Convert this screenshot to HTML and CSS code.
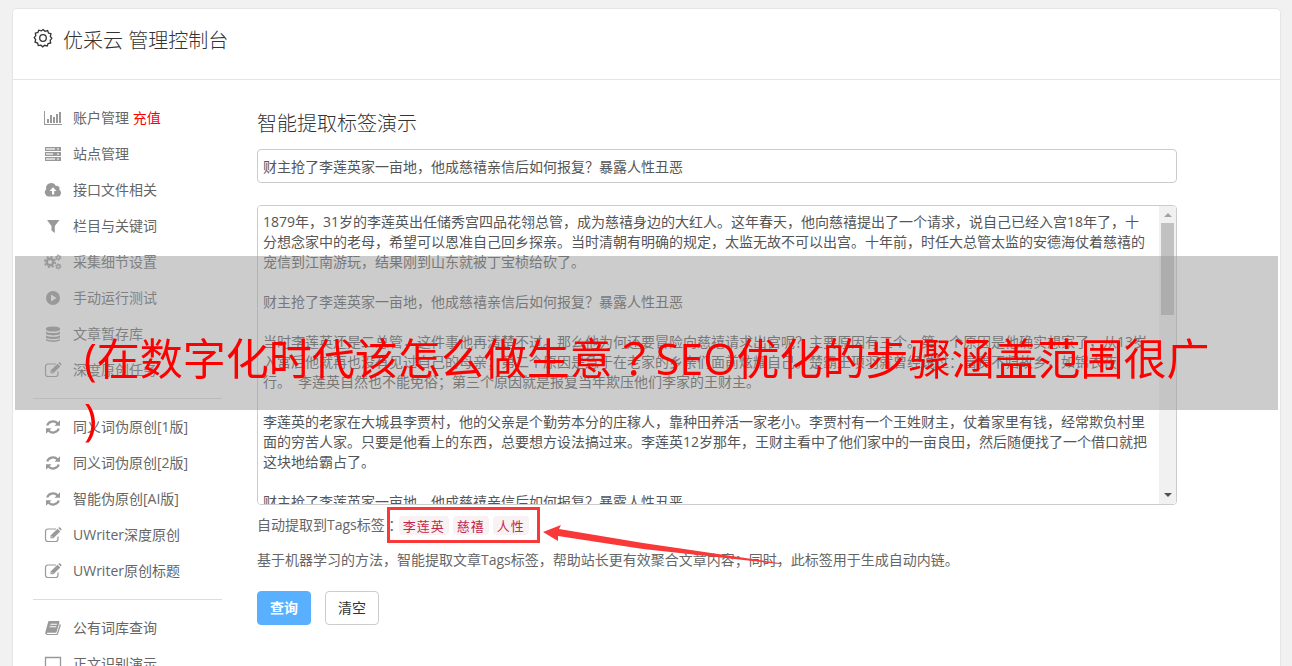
FILE: index.html
```html
<!DOCTYPE html>
<html lang="zh-CN">
<head>
  <meta charset="UTF-8"/>
  <meta name="viewport" content="width=device-width, initial-scale=1.0"/>
  <title>优采云 管理控制台</title>
  <link rel="stylesheet" href="styles.css">
</head>
<body>
  <svg class="sprite" aria-hidden="true">
    <symbol id="i-chart" viewBox="0 0 18 16"><path d="M0 1h1v13h17v1H0zM3 9h2v4H3zM6 5h2v8H6zM9 7h2v6H9zM12 4h2v9h-2zM15 2h2v11h-2z"/></symbol>
    <symbol id="i-server" viewBox="0 0 18 16"><path d="M1 1h16v4H1zM1 6h16v4H1zM1 11h16v4H1z"/><path d="M2 2h9v2H2zM2 7h7v2H2zM2 12h9v2H2z" fill="#fff" opacity=".6"/><path d="M13 2h2v2h-2zM13 7h2v2h-2zM13 12h2v2h-2z" fill="#fff" opacity=".5"/></symbol>
    <symbol id="i-cloud" viewBox="0 0 18 16"><path fill-rule="evenodd" d="M4.500 14.500A4.200 4.200 0 0 1 2.200 7.200 5.200 5.200 0 0 1 12 4a2.600 2.600 0 0 1 3.200 3.700 3.700 3.700 0 0 1-1 6.800zM9 5.200 5.500 9H8v3.500h2.200V9h2.300z"/></symbol>
    <symbol id="i-filter" viewBox="0 0 18 16"><path d="M3 2h12.500L10.800 8v7L7.500 12.500V8z"/></symbol>
    <symbol id="i-cogs" viewBox="0 0 18 16"><circle cx="6" cy="8" r="3.300" fill="none" stroke="currentColor" stroke-width="2.400"/><circle cx="6" cy="8" r="5.200" fill="none" stroke="currentColor" stroke-width="1.800" stroke-dasharray="2.040 2.040"/><circle cx="14.300" cy="3.600" r="1.700" fill="none" stroke="currentColor" stroke-width="1.400"/><circle cx="14.300" cy="3.600" r="2.700" fill="none" stroke="currentColor" stroke-dasharray="1.410 1.410"/><circle cx="14.300" cy="12.400" r="1.700" fill="none" stroke="currentColor" stroke-width="1.400"/><circle cx="14.300" cy="12.400" r="2.700" fill="none" stroke="currentColor" stroke-dasharray="1.410 1.410"/></symbol>
    <symbol id="i-play" viewBox="0 0 18 16"><path fill-rule="evenodd" d="M9 1a7 7 0 1 0 0 14A7 7 0 1 0 9 1zM7 4.500 12.600 8 7 11.500z"/></symbol>
    <symbol id="i-database" viewBox="0 0 18 16"><path d="M2 2.500C2-.3 16-.3 16 2.500v1C16 6.200 2 6.200 2 3.500zM2 5.500c2 2 12 2 14 0v2c0 2.500-14 2.500-14 0zM2 9.200c2 2 12 2 14 0v2c0 2.500-14 2.500-14 0zM2 12.800c2 2 12 2 14 0v1c0 2.800-14 2.800-14 0z"/></symbol>
    <symbol id="i-edit" viewBox="0 0 18 16"><path d="M12 2H4a2.500 2.500 0 0 0-2.500 2.500v7.500A2.500 2.500 0 0 0 4 14.500h7.500A2.500 2.500 0 0 0 14 12v-2.500" fill="none" stroke="currentColor" stroke-width="1.200"/><path fill-rule="evenodd" d="M6.500 8.500 13.500 1.700l2.800 2.700-7 6.900H6.500zM7.500 8.900v1.400h1.400l-.7-.8zM14.300 1l.8-.7c.8-.6 3 1.500 2.300 2.400l-.7.900z"/></symbol>
    <symbol id="i-refresh" viewBox="0 0 18 16"><path d="M3.200 6.500A6 5.500 0 0 1 13.600 4.500M14.800 9.500A6 5.500 0 0 1 4.400 11.500" fill="none" stroke="currentColor" stroke-width="2.200"/><path d="M16 1.300v5.500h-5.500zM2 14.700V9.200h5.500z"/></symbol>
    <symbol id="i-book" viewBox="0 0 18 16"><path fill-rule="evenodd" d="M5.500 1h8.700c1 0 1.500.6 1.200 1.600l-2.700 8.800c-.3 1-.9 1.400-1.800 1.400H3.500c-.8 0-.8 1.200.2 1.200h8.100c.7 0 1-.3 1.200-1L15.800 4c1 .3 1.200.9.900 1.800l-2.600 8c-.2.800-.9 1.300-1.800 1.300H3.500c-1.700 0-2.700-1.500-2.100-3L4 2.400C4.300 1.400 4.700 1 5.500 1zM6.500 3.700l-.3 1h6.600l.3-1zM5.800 6.200l-.3 1h6.600l.3-1z"/></symbol>
    <symbol id="i-laptop" viewBox="0 0 18 16"><path d="M1.500 1.500h15v10h-15zM0 14h18" fill="none" stroke="currentColor" stroke-width="1.300"/></symbol>
  </svg>

  <div class="panel">
    <header class="panel-head">
      <svg class="gear" viewBox="0 0 20 20"><path d="M10 1.500 12 3.300 14.600 2.600 15.500 5 18 5.800 17.300 8.400 18.800 10.300 17.200 12.300 17.700 15 15.100 15.600 14.200 18 11.700 17.300 9.700 18.800 7.900 17.200 5.300 17.600 4.600 15.100 2 14.200 2.700 11.700 1.200 9.700 2.800 7.700 2.300 5.200 4.900 4.500 5.800 2.200 8.400 2.900z"/><circle cx="10" cy="10" r="3.300"/></svg>
      <h1>优采云 管理控制台</h1>
    </header>

    <div class="panel-body">
      <nav class="side">
        <ul>
          <li><a href="#"><svg><use href="#i-chart"/></svg>账户管理 <span class="pay">充值</span></a></li>
          <li><a href="#"><svg><use href="#i-server"/></svg>站点管理</a></li>
          <li><a href="#"><svg><use href="#i-cloud"/></svg>接口文件相关</a></li>
          <li><a href="#"><svg><use href="#i-filter"/></svg>栏目与关键词</a></li>
          <li><a href="#"><svg><use href="#i-cogs"/></svg>采集细节设置</a></li>
          <li><a href="#"><svg><use href="#i-play"/></svg>手动运行测试</a></li>
          <li><a href="#"><svg><use href="#i-database"/></svg>文章暂存库</a></li>
          <li><a href="#"><svg><use href="#i-edit"/></svg>深度原创任务</a></li>
        </ul>
        <ul>
          <li><a href="#"><svg><use href="#i-refresh"/></svg>同义词伪原创[1版]</a></li>
          <li><a href="#"><svg><use href="#i-refresh"/></svg>同义词伪原创[2版]</a></li>
          <li><a href="#"><svg><use href="#i-refresh"/></svg>智能伪原创[AI版]</a></li>
          <li><a href="#"><svg><use href="#i-edit"/></svg>UWriter深度原创</a></li>
          <li><a href="#"><svg><use href="#i-edit"/></svg>UWriter原创标题</a></li>
        </ul>
        <ul>
          <li><a href="#"><svg><use href="#i-book"/></svg>公有词库查询</a></li>
          <li><a href="#"><svg><use href="#i-laptop"/></svg>正文识别演示</a></li>
        </ul>
      </nav>

      <main class="content">
        <h2>智能提取标签演示</h2>
        <form onsubmit="return false">
          <input type="text" aria-label="标题" value="财主抢了李莲英家一亩地，他成慈禧亲信后如何报复？暴露人性丑恶">
          <div class="editor">
            <textarea aria-label="正文">1879年，31岁的李莲英出任储秀宫四品花翎总管，成为慈禧身边的大红人。这年春天，他向慈禧提出了一个请求，说自己已经入宫18年了，十分想念家中的老母，希望可以恩准自己回乡探亲。当时清朝有明确的规定，太监无故不可以出宫。十年前，时任大总管太监的安德海仗着慈禧的宠信到江南游玩，结果刚到山东就被丁宝桢给砍了。

财主抢了李莲英家一亩地，他成慈禧亲信后如何报复？暴露人性丑恶

当时李莲英还是二总管，这件事他再清楚不过。那么他为何还要冒险向慈禧请求出宫呢？主要原因有三个。第一个原因是他确实想家了，从13岁入宫后他就再也没有见过自己的母亲；第二个原因是急于在老家的乡亲们面前炫耀自己。楚霸王项羽就曾经说过：富贵不归故乡，如锦衣夜
行。　李莲英自然也不能免俗；第三个原因就是报复当年欺压他们李家的王财主。

李莲英的老家在大城县李贾村，他的父亲是个勤劳本分的庄稼人，靠种田养活一家老小。李贾村有一个王姓财主，仗着家里有钱，经常欺负村里面的穷苦人家。只要是他看上的东西，总要想方设法搞过来。李莲英12岁那年，王财主看中了他们家中的一亩良田，然后随便找了一个借口就把这块地给霸占了。

财主抢了李莲英家一亩地，他成慈禧亲信后如何报复？暴露人性丑恶

</textarea>
            <div class="scrollbar" aria-hidden="true">
              <svg viewBox="0 0 8 4"><path d="M0 4 4 0l4 4z"/></svg>
              <span class="thumb"></span>
              <svg class="down" viewBox="0 0 8 4"><path d="M0 0h8L4 4z"/></svg>
            </div>
          </div>
          <div class="tags">自动提取到Tags标签<span class="mark" lang="ja">：</span><span class="tag-list"><code>李莲英</code><code>慈禧</code><code>人性</code>
            <svg class="arrow" viewBox="0 0 240 44"><path d="M0 7 18 0 16 4 100 18 236 38 238 39 236 39 100 24 15 11 15 16z"/></svg></span></div>
          <p class="note">基于机器学习的方法，智能提取文章Tags标签，帮助站长更有效聚合文章内容；同时，此标签用于生成自动内链。</p>
          <div class="actions">
            <button class="primary" type="submit">查询</button>
            <button type="reset">清空</button>
          </div>
        </form>
      </main>
    </div>
  </div>

  <div class="banner">(在数字化时代该怎么做生意<span class="mark" lang="ja">？</span>SEO优化的步骤涵盖范围很广)</div>
</body>
</html>
```
FILE: styles.css
```css
* {
  box-sizing: border-box;
}

body {
  margin: 0;
  padding: 9px 12px 0 13px;
  background: #f1f1f1;
  color: #666;
  font: 14px/20px "Open Sans", "Noto Sans CJK SC", sans-serif;
}

.sprite {
  position: absolute;
  width: 0;
  height: 0;
}

.panel {
  background: #fff;
  border-radius: 4px;
  box-shadow: 0 0 0 1px #e5e5e5;
}

.panel-head {
  display: flex;
  align-items: flex-start;
  gap: 10px;
  height: 71px;
  padding: 17px 20px;
  border-bottom: 1px solid #e5e5e5;
}

.gear {
  width: 20px;
  height: 20px;
  margin-top: 2px;
  fill: none;
  stroke: #333;
  stroke-width: 1.3;
}

h1,
h2 {
  margin: 0;
  color: #333;
  font-size: 20px;
  line-height: 30px;
  font-weight: 300;
}

.panel-body {
  display: flex;
  padding: 20px;
}

.side {
  flex: 0 0 189px;
}

.side ul {
  margin: 0;
  padding: 0 0 10px;
  list-style: none;
}

.side ul + ul {
  padding-top: 10px;
  border-top: 1px solid #ddd;
}

.side a {
  display: flex;
  align-items: center;
  height: 36px;
  padding-left: 11px;
  color: #666;
  text-decoration: none;
  white-space: pre;
}

.side svg {
  width: 18px;
  height: 16px;
  margin-right: 11px;
  color: #999;
  fill: currentColor;
}

.side .pay {
  color: #f00;
}

.content {
  flex: 1;
  padding: 9px 83px 0 35px;
}

input,
textarea {
  display: block;
  width: 100%;
  border: 1px solid #ccc;
  border-radius: 4px;
  background: #fff;
  color: #555;
  font: inherit;
}

input {
  height: 34px;
  margin-top: 10px;
  padding: 6px 5px;
}

.editor {
  position: relative;
  margin-top: 22px;
}

textarea {
  height: 300px;
  padding: 6px 23px 6px 5px;
  resize: none;
  scrollbar-width: none;
}

.scrollbar {
  position: absolute;
  top: 1px;
  right: 1px;
  bottom: 1px;
  display: flex;
  flex-direction: column;
  align-items: center;
  width: 17px;
  padding: 7px 0;
  border-radius: 0 3px 3px 0;
  background: #f1f1f1;
}

.scrollbar svg {
  width: 8px;
  height: 4px;
  fill: #a3a3a3;
}

.scrollbar .down {
  margin-top: auto;
  fill: #505050;
}

.thumb {
  width: 13px;
  height: 92px;
  margin-top: 6px;
  background: #c1c1c1;
}

.tags {
  display: flex;
  align-items: center;
  height: 36px;
  margin-top: 2px;
}

.tag-list {
  position: relative;
  display: flex;
  gap: 4px;
  margin-left: -12px;
  padding: 6px 8px 5px 9px;
  border: 3px solid #f93838;
}

code {
  padding: 0 4px;
  border-radius: 4px;
  background: #f9f2f4;
  color: #c7254e;
  font: 13px/19px "Noto Sans CJK SC", sans-serif;
  letter-spacing: 1px;
}

.arrow {
  position: absolute;
  top: 15px;
  left: 153px;
  width: 240px;
  height: 44px;
  fill: #f93838;
}

.note {
  margin: 7px 0 21px;
}

.actions {
  display: flex;
  gap: 14px;
}

button {
  width: 54px;
  height: 34px;
  padding: 0;
  border: 1px solid #ccc;
  border-radius: 4px;
  background: #fff;
  color: #333;
  font: inherit;
  cursor: pointer;
}

button.primary {
  border-color: #58b0ff;
  background: #58b0ff;
  color: #fff;
  font-weight: bold;
}

/* title laid over the page */
.banner {
  position: absolute;
  top: 256px;
  left: 15px;
  right: 14px;
  height: 154px;
  padding: 73px 65px 0 69px;
  background: rgba(153, 153, 153, 0.5);
  color: #f00;
  font-size: 43px;
  line-height: 60px;
  line-break: anywhere;
}

/* full-width punctuation centred in its box */
.mark {
  font-family: "Noto Sans CJK JP", sans-serif;
  line-height: 1;
}
```
